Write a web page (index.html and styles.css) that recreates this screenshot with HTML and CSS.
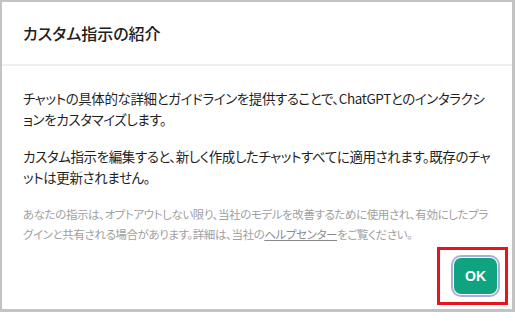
FILE: index.html
```html
<!DOCTYPE html>
<html lang="ja">
<head>
    <meta charset="UTF-8">
    <meta name="viewport" content="width=device-width, initial-scale=1.0">
    <title>カスタム指示の紹介</title>
    <link rel="stylesheet" href="styles.css">
</head>
<body>
    <!-- ダイアログ -->
    <div class="dialog">
        <div class="dialog-header">
            <h2>カスタム指示の紹介</h2>
        </div>

        <div class="dialog-body">
            <p>チャットの具体的な詳細とガイドラインを提供することで、ChatGPTとのインタラクションをカスタマイズします。</p>
            <p>カスタム指示を編集すると、新しく作成したチャットすべてに適用されます。既存のチャットは更新されません。</p>
            <p class="note">あなたの指示は、オプトアウトしない限り、当社のモデルを改善するために使用され、有効にしたプラグインと共有される場合があります。詳細は、当社の<a href="#">ヘルプセンター</a>をご覧ください。</p>
        </div>

        <div class="dialog-footer">
            <div class="highlight">
                <button class="ok-button">OK</button>
            </div>
        </div>
    </div>
</body>
</html>
```

FILE: styles.css
```css
body {
    margin: 0;
    padding: 2px 3px 3px 2px;
    height: 312px;
    box-sizing: border-box;
    background: #c3c3c3;
    font-family: "Noto Sans CJK JP", "Noto Sans", sans-serif;
    font-feature-settings: "palt";
    color: #1f1f1f;
    overflow: hidden;
}

.dialog {
    height: 100%;
    background: #ffffff;
    display: flex;
    flex-direction: column;
}

/* Заголовок */
.dialog-header {
    height: 62px;
    padding: 0 21px;
    display: flex;
    align-items: center;
    border-bottom: 2px solid #eeeeee;
}

.dialog-header h2 {
    margin: 0;
    font-size: 16px;
    font-weight: 500;
    color: #202020;
}

/* Текст */
.dialog-body {
    padding: 22px 19px 0 21px;
    line-break: loose;
}

.dialog-body p {
    margin: 0 0 16px 0;
    font-size: 13.5px;
    letter-spacing: -0.4px;
    line-height: 21px;
}

.dialog-body .note {
    font-size: 11.5px;
    letter-spacing: -0.4px;
    line-height: 20px;
    color: #a0a0a0;
    margin-bottom: 0;
}

.note a {
    color: #8a8a8a;
    text-decoration: underline;
}

/* Кнопка */
.dialog-footer {
    display: flex;
    justify-content: flex-end;
    padding: 3px 4px 0 0;
}

.highlight {
    border: 3px solid #e8131c;
    padding: 5px 5px 5px 11px;
}

.ok-button {
    width: 43px;
    height: 36px;
    margin: 3px;
    display: block;
    border: none;
    border-radius: 7px;
    background: #10a37f;
    color: #ffffff;
    font-family: "Liberation Sans", sans-serif;
    font-weight: bold;
    font-size: 14px;
    box-shadow: 0 0 0 1px #ffffff, 0 0 0 3px #a9afdc;
    cursor: pointer;
}
```
